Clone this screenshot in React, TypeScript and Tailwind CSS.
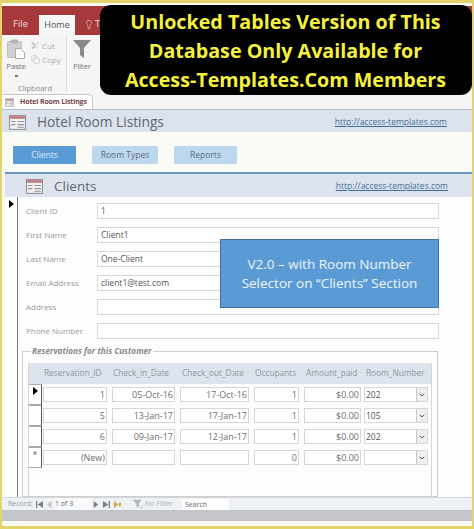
import { Scissors, Copy, Lightbulb, ChevronDown } from 'lucide-react';

const fields = [
  { label: 'Client ID', value: '1' },
  { label: 'First Name', value: 'Client1' },
  { label: 'Last Name', value: 'One-Client' },
  { label: 'Email Address', value: 'client1@test.com' },
  { label: 'Address', value: '' },
  { label: 'Phone Number', value: '' },
];

const reservations = [
  { id: '1', inDate: '05-Oct-16', outDate: '17-Oct-16', occ: '1', paid: '$0.00', room: '202', mark: 'current' },
  { id: '5', inDate: '13-Jan-17', outDate: '17-Jan-17', occ: '1', paid: '$0.00', room: '105', mark: '' },
  { id: '6', inDate: '09-Jan-17', outDate: '12-Jan-17', occ: '1', paid: '$0.00', room: '202', mark: '' },
  { id: '(New)', inDate: '', outDate: '', occ: '0', paid: '$0.00', room: '', mark: 'new' },
];

function FormIcon({ className }: { className: string }) {
  return (
    <svg viewBox="0 0 16 14" className={className}>
      <rect x="0.5" y="0.5" width="15" height="13" fill="#f4f1f2" stroke="#8f8f94" />
      <rect x="1" y="1" width="14" height="2.5" fill="#c07a85" />
      <path d="M2 6h4M2 9h4M8 6h6M8 9h6M8 11.5h6" stroke="#8d93a0" strokeWidth="1" />
    </svg>
  );
}

function PasteIcon() {
  return (
    <svg viewBox="0 0 18 20" className="w-[18px] h-[20px]">
      <rect x="0.5" y="2.5" width="14" height="16" rx="1" fill="#d3cfd0" stroke="#c2bfc0" />
      <rect x="4" y="0.5" width="7" height="4" rx="1" fill="#b5b2b3" />
      <path d="M8.5 9.5h5l4 4v6h-9z" fill="#fbfbfb" stroke="#a9a9a9" />
    </svg>
  );
}

function FilterIcon() {
  return (
    <svg viewBox="0 0 18 18" className="w-[18px] h-[18px]">
      <path d="M0 0h18l-7 8v10l-4-3V8z" fill="#8a8a8a" />
    </svg>
  );
}

function NavIcon({ d, color = '#7d7d7d' }: { d: string; color?: string }) {
  return (
    <svg viewBox="0 0 8 8" className="w-[7px] h-[7px] shrink-0">
      <path d={d} fill={color} />
    </svg>
  );
}

function Cell({ width, text }: { width: string; text: string }) {
  return (
    <div className={`h-[15px] ${width} bg-white border border-[#d4d6d8] pr-[1px] text-right text-[9px] leading-[13px] text-[#707070]`}>
      {text}
    </div>
  );
}

export default function App() {
  return (
    <div className="relative w-[474px] h-[529px] overflow-hidden bg-[#e3d56a] pt-[3px] px-[2px] pb-[3px] font-['Open_Sans',sans-serif]">
      <div className="h-[523px] bg-[#fbfbf6] flex flex-col">
        <div className="h-[3px] shrink-0" />

        {/* ribbon tabs */}
        <div className="h-[29px] bg-[#a5393c] flex items-end pl-[11px] shrink-0">
          <span className="w-[26px] mb-[4px] text-[9.5px] text-[#f1dcdc]">File</span>
          <span className="w-[36px] h-[20px] bg-[#f6f7f7] text-[9px] leading-[20px] text-[#555] text-center">Home</span>
          <Lightbulb className="ml-[9px] mb-[5px] w-[10px] h-[11px] text-[#f1dcdc]" strokeWidth={1.5} />
          <span className="ml-[1px] mb-[4px] text-[9.5px] text-[#f1dcdc]">Te</span>
        </div>

        {/* ribbon */}
        <div className="h-[60px] bg-[#f5f5f5] flex shrink-0">
          <div className="w-[65px] h-[56px] relative border-r border-[#dedede] shrink-0">
            <div className="flex pl-[4px] pt-[4px]">
              <div className="flex flex-col items-center w-[20px]">
                <PasteIcon />
                <span className="mt-[1px] text-[8px] leading-[12px] tracking-[-0.2px] text-[#757575]">Paste</span>
                <div className="mt-[3px] w-[3px] h-[2px] bg-[#777]" />
              </div>
              <div className="ml-[5px] flex flex-col gap-[3px] pt-[1px]">
                <div className="flex items-center gap-[3px] text-[8px] leading-[11px] text-[#aaa]">
                  <Scissors className="w-[8px] h-[9px] text-[#a8aab4]" />
                  Cut
                </div>
                <div className="flex items-center gap-[2px] text-[8px] leading-[11px] text-[#aaa]">
                  <Copy className="w-[9px] h-[9px] text-[#c0c0c0]" />
                  Copy
                </div>
              </div>
            </div>
            <span className="absolute left-[16px] top-[48px] text-[7.5px] leading-[10px] text-[#888]">Clipboard</span>
          </div>
          <div className="ml-[6px] pt-[5px] w-[18px] flex flex-col items-center">
            <FilterIcon />
            <span className="mt-[2px] text-[8px] leading-[11px] tracking-[-0.2px] text-[#757575]">Filter</span>
          </div>
        </div>

        {/* document tab */}
        <div className="h-[15px] bg-[#f5f5f5] border-b border-[#b9bcc2] flex items-end shrink-0">
          <div className="ml-[1px] w-[90px] h-[15px] bg-white border-r border-t border-[#c4c7cc] rounded-tr-[5px] flex items-center pl-[2px]">
            <FormIcon className="w-[9px] h-[9px]" />
            <span className="ml-[6px] text-[7px] font-bold tracking-[-0.15px] text-[#6f4548] whitespace-nowrap">Hotel Room Listings</span>
          </div>
        </div>

        {/* form header */}
        <div className="h-[22px] bg-[#dde3ec] flex items-center justify-between pl-[7px] pr-[25px] pt-[2px] shrink-0">
          <div className="flex items-center gap-[11px]">
            <FormIcon className="w-[17px] h-[15px]" />
            <span className="text-[13.7px] text-[#5f6672]">Hotel Room Listings</span>
          </div>
          <span className="text-[8.5px] text-[#3d6d9c] underline">http://access-templates.com</span>
        </div>

        {/* nav buttons */}
        <div className="h-[40px] flex items-start gap-[16px] pl-[11px] pt-[14px] shrink-0">
          <div className="w-[63px] h-[18px] bg-[#5b9bd5] rounded-[1px] text-center text-[8.5px] leading-[18px] text-[#dcebf7]">Clients</div>
          <div className="w-[66px] h-[18px] bg-[#bdd7ee] rounded-[1px] text-center text-[8.5px] leading-[18px] text-[#5b6b7b]">Room Types</div>
          <div className="w-[63px] h-[18px] bg-[#bdd7ee] rounded-[1px] text-center text-[8.5px] leading-[18px] text-[#5b6b7b]">Reports</div>
        </div>

        {/* clients section */}
        <div className="flex-1 flex flex-col min-h-0 ml-[3px] bg-[#fdfdfd]">
          <div className="h-[25px] shrink-0 bg-[#dde4ee] border-t-2 border-[#6f97c0] flex items-center justify-between pl-[21px] pr-[24px] pt-[2px]">
            <div className="flex items-center gap-[11px]">
              <FormIcon className="w-[17px] h-[15px]" />
              <span className="text-[13.5px] text-[#5f6672]">Clients</span>
            </div>
            <span className="text-[8.5px] text-[#3d6d9c] underline">http://access-templates.com</span>
          </div>

          <div className="h-[300px] shrink-0 flex">
            {/* record selector */}
            <div className="w-[13px] shrink-0 bg-white border-r border-[#777] pt-[3px] pl-[4px]">
              <div className="w-0 h-0 border-y-[4px] border-y-transparent border-l-[5px] border-l-black" />
            </div>

            <div className="flex-1 min-w-0 flex flex-col pt-[6px]">
              <div className="flex flex-col gap-[8px] pl-[8px]">
                {fields.map((f) => (
                  <div key={f.label} className="flex items-center h-[16px]">
                    <span className="w-[71px] text-[8px] text-[#9a9a9a] whitespace-nowrap">{f.label}</span>
                    <div className="w-[342px] h-[16px] bg-white border border-[#d8d9da] px-[3px] text-[8.5px] leading-[14px] text-[#555]">
                      {f.value}
                    </div>
                  </div>
                ))}
              </div>

              {/* reservations subform */}
              <div className="relative mt-[12px] ml-[4px] w-[416px] h-[146px] border border-[#cfcfcf] pl-[5px] pt-[11px]">
                <span className="absolute -top-[7px] left-[8px] bg-[#fdfdfd] px-[1px] text-[8.2px] font-bold italic text-[#8a8a8a] whitespace-nowrap">
                  Reservations for this Customer
                </span>
                <div className="w-[404px] h-[133px] border-x border-[#d6d6d6]">
                  <div className="h-[21px] bg-[#dde4ee] flex items-center text-[8.3px] text-[#8f969f] whitespace-nowrap">
                    <span className="w-[84px] pl-[15px]">Reservation_ID</span>
                    <span className="w-[69px]">Check_in_Date</span>
                    <span className="w-[73px]">Check_out_Date</span>
                    <span className="w-[51px]">Occupants</span>
                    <span className="w-[60px]">Amount_paid</span>
                    <span>Room_Number</span>
                  </div>
                  <div className="flex flex-col">
                    {reservations.map((r) => (
                      <div key={r.id} className="h-[21px] flex items-start">
                        <div className="w-[13px] h-[21px] shrink-0 border-y border-r border-y-[#aaa] border-r-[#555] bg-white flex justify-center pt-[2px]">
                          {r.mark === 'current' && (
                            <div className="w-0 h-0 border-y-[4px] border-y-transparent border-l-[5px] border-l-black" />
                          )}
                          {r.mark === 'new' && <span className="text-[9px] leading-[9px] text-[#666]">*</span>}
                        </div>
                        <div className="ml-[1px] mt-[3px] flex">
                          <Cell width="w-[64px]" text={r.id} />
                          <div className="w-[5px]" />
                          <Cell width="w-[63px]" text={r.inDate} />
                          <div className="w-[5px]" />
                          <Cell width="w-[69px]" text={r.outDate} />
                          <div className="w-[5px]" />
                          <Cell width="w-[45px]" text={r.occ} />
                          <div className="w-[5px]" />
                          <Cell width="w-[57px]" text={r.paid} />
                          <div className="w-[3px]" />
                          <div className="h-[15px] w-[64px] bg-white border border-[#d4d6d8] flex justify-between">
                            <span className="pl-[1px] text-[8.5px] leading-[13px] text-[#555]">{r.room}</span>
                            <div className="w-[11px] h-[13px] bg-[#efefef] border-l border-[#c9c9c9] flex items-center justify-center">
                              <ChevronDown className="w-[8px] h-[8px] text-[#555]" strokeWidth={3} />
                            </div>
                          </div>
                        </div>
                      </div>
                    ))}
                  </div>
                </div>
              </div>
            </div>
          </div>

          {/* record nav */}
          <div className="-ml-[3px] h-[13px] shrink-0 bg-[#eef2f6] border-t border-[#d5d5d5] flex items-center pl-[6px] text-[7px] text-[#999] whitespace-nowrap">
            <span className="w-[28px]">Record:</span>
            <NavIcon d="M0 0h1.5v8H0zM8 0v8L2 4z" />
            <span className="w-[3px]" />
            <NavIcon d="M6 0v8L1 4z" color="#c4c4c4" />
            <span className="ml-[1px] w-[38px] h-[12px] leading-[12px] pl-[1px] bg-[#f8f9fb] text-[#666]">1 of 3</span>
            <NavIcon d="M2 0v8l5-4z" />
            <span className="w-[4px]" />
            <NavIcon d="M0 0v8l6-4zM6.5 0H8v8H6.5z" />
            <span className="w-[4px]" />
            <NavIcon d="M0 0v8l5-4zM5.5 2h2.5v4H5.5z" color="#cfae45" />
            <span className="w-[12px]" />
            <svg viewBox="0 0 12 12" className="w-[11px] h-[11px] shrink-0">
              <path d="M0 1h9L6 5v4L4 8V5zM8 7l3 4M11 7l-3 4" fill="#b5b5b5" stroke="#b5b5b5" strokeWidth="0.6" />
            </svg>
            <span className="ml-[1px] w-[37px] text-[#b0b0b0]">No Filter</span>
            <span className="w-[47px] h-[11px] bg-white pl-[3px] leading-[11px] text-[#666]">Search</span>
          </div>
          <div className="-ml-[3px] h-[11px] shrink-0 bg-[#c3c5cb]" />
          <div className="-ml-[3px] flex-1 bg-[#fbfbf6]" />
        </div>
      </div>

      {/* black banner */}
      <div className="absolute left-[100px] top-[5px] w-[372px] h-[90px] rounded-[11px] bg-black flex flex-col items-center justify-center pt-[1px] pr-[1px] text-[#f6f23c] text-[19.7px] leading-[29px] font-bold whitespace-nowrap">
        <span>Unlocked Tables Version of This</span>
        <span>Database Only Available for</span>
        <span>Access-Templates.Com Members</span>
      </div>

      {/* blue note */}
      <div className="absolute left-[220px] top-[239px] w-[219px] h-[69px] bg-[#5b9bd5] border border-[#41719c] flex flex-col items-center justify-center text-[#eef5fb] text-[13.5px] leading-[18.5px] whitespace-nowrap">
        <span>V2.0 – with Room Number</span>
        <span>Selector on “Clients” Section</span>
      </div>
    </div>
  );
}
